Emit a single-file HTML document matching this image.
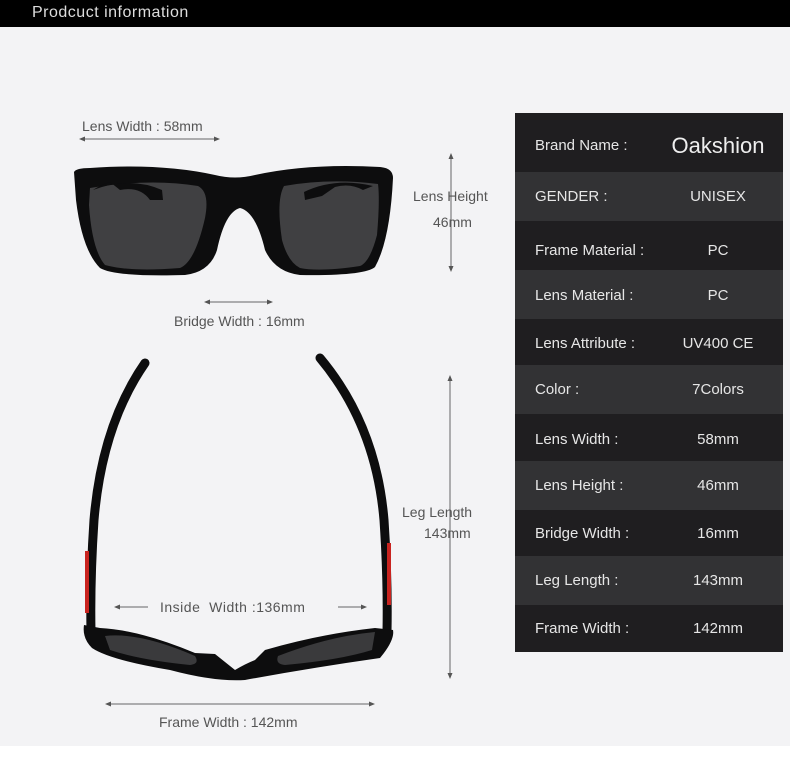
<!DOCTYPE html>
<html><head><style>
body{margin:0;width:790px;height:762px;background:#fff;position:relative;overflow:hidden;font-family:"Liberation Sans",sans-serif}
.bg{position:absolute;left:0;top:27px;width:790px;height:719px;background:#f3f3f5}
.hd{position:absolute;left:0;top:0;width:790px;height:27px;background:#000;color:#ddd;font-size:16px;letter-spacing:0.5px}
.hd span{position:absolute;left:32px;top:4px}
.t{position:absolute;color:#555;font-size:14px;white-space:nowrap}
.row{position:absolute;left:515px;width:268px;color:#e6e6e6;font-size:15px}
.row .k{position:absolute;left:20px;white-space:nowrap}
.row .v{position:absolute;left:203px;transform:translateX(-50%);white-space:nowrap}
</style></head><body>
<div class="bg"></div>
<div class="hd"><span>Prodcuct information</span></div>
<svg width="790" height="762" style="position:absolute;left:0;top:0">
<defs><marker id="a" markerWidth="6" markerHeight="6" refX="3" refY="3" orient="auto-start-reverse"><path d="M0,0.5 L6,3 L0,5.5z" fill="#555"/></marker></defs>
<g stroke="#666" stroke-width="1" fill="none">
<line x1="82" y1="139" x2="217" y2="139" marker-start="url(#a)" marker-end="url(#a)"/>
<line x1="207" y1="302" x2="270" y2="302" marker-start="url(#a)" marker-end="url(#a)"/>
<line x1="451" y1="156" x2="451" y2="269" marker-start="url(#a)" marker-end="url(#a)"/>
<line x1="450" y1="378" x2="450" y2="676" marker-start="url(#a)" marker-end="url(#a)"/>
<line x1="108" y1="704" x2="372" y2="704" marker-start="url(#a)" marker-end="url(#a)"/>
<line x1="117" y1="607" x2="148" y2="607" marker-start="url(#a)"/>
<line x1="338" y1="607" x2="364" y2="607" marker-end="url(#a)"/>
</g>
<!-- front glasses -->
<path d="M74,172 Q76,168 90,168 Q160,163 215,175 Q235,180 255,175 Q310,163 380,167 Q393,168 393,178 Q390,240 375,267 Q365,276 300,275 Q275,272 265,250 Q256,212 240,208 Q225,212 217,250 Q210,272 185,275 Q115,277 100,268 Q82,250 76,200z" fill="#0d0d0e"/>
<path d="M90,188 Q150,178 198,186 Q210,192 205,218 Q195,262 180,268 Q130,272 105,265 Q92,250 89,205z" fill="#404042"/>
<path d="M284,186 Q330,178 378,184 Q380,200 377,235 Q370,262 360,266 Q320,272 300,268 Q288,262 282,240 Q276,200 284,186z" fill="#404042"/>
<path d="M93,190 Q100,185 110,182 L120,190 Q140,186 150,200 L163,200 L162,190 Q130,176 93,190z" fill="#0d0d0e"/>
<path d="M363,190 Q350,183 335,187 L322,196 L305,200 L304,192 Q335,177 373,186z" fill="#0d0d0e"/>
<!-- top view -->
<path d="M145,363 Q102,425 94,520 Q90,580 91,632" stroke="#0d0d0e" stroke-width="9" fill="none" stroke-linecap="round"/>
<path d="M320,358 Q376,425 384,520 Q388,580 387,632" stroke="#0d0d0e" stroke-width="9" fill="none" stroke-linecap="round"/>
<rect x="85" y="551" width="4" height="62" fill="#c8231f"/>
<rect x="387" y="543" width="4" height="62" fill="#c8231f"/>
<path d="M84,625 L100,628 Q140,630 195,653 L215,654 Q225,662 235,670 Q245,664 255,660 L265,650 Q320,634 375,628 L393,630 Q395,640 380,658 Q310,668 245,680 Q215,682 170,670 Q110,660 92,648 Q82,638 84,625z" fill="#0d0d0e"/>
<path d="M105,636 Q140,632 195,656 Q200,664 190,665 Q140,660 110,650z" fill="#3a3a3c"/>
<path d="M375,632 Q330,636 278,656 Q275,664 285,665 Q340,660 372,650z" fill="#3a3a3c"/>
</svg>
<div class="t" style="left:82px;top:118px">Lens Width : 58mm</div>
<div class="t" style="left:174px;top:313px">Bridge Width : 16mm</div>
<div class="t" style="left:413px;top:188px">Lens Height</div>
<div class="t" style="left:433px;top:214px">46mm</div>
<div class="t" style="left:402px;top:504px">Leg Length</div>
<div class="t" style="left:424px;top:525px">143mm</div>
<div class="t" style="left:160px;top:599px;letter-spacing:0.5px">Inside &nbsp;Width :136mm</div>
<div class="t" style="left:159px;top:714px">Frame Width : 142mm</div>

<div class="row" style="top:113px;height:59px;background:#1f1e20"><span class="k" style="top:24px">Brand Name :</span><span class="v" style="top:20px;font-size:22px;color:#eee">Oakshion</span></div>
<div class="row" style="top:172px;height:49px;background:#323234"><span class="k" style="top:16px">GENDER :</span><span class="v" style="top:16px">UNISEX</span></div>
<div class="row" style="top:221px;height:49px;background:#1f1e20"><span class="k" style="top:21px">Frame Material :</span><span class="v" style="top:21px">PC</span></div>
<div class="row" style="top:270px;height:49px;background:#323234"><span class="k" style="top:17px">Lens Material :</span><span class="v" style="top:17px">PC</span></div>
<div class="row" style="top:319px;height:46px;background:#1f1e20"><span class="k" style="top:16px">Lens Attribute :</span><span class="v" style="top:16px">UV400 CE</span></div>
<div class="row" style="top:365px;height:49px;background:#323234"><span class="k" style="top:16px">Color :</span><span class="v" style="top:16px">7Colors</span></div>
<div class="row" style="top:414px;height:47px;background:#1f1e20"><span class="k" style="top:17px">Lens Width :</span><span class="v" style="top:17px">58mm</span></div>
<div class="row" style="top:461px;height:49px;background:#323234"><span class="k" style="top:16px">Lens Height :</span><span class="v" style="top:16px">46mm</span></div>
<div class="row" style="top:510px;height:46px;background:#1f1e20"><span class="k" style="top:15px">Bridge Width :</span><span class="v" style="top:15px">16mm</span></div>
<div class="row" style="top:556px;height:49px;background:#323234"><span class="k" style="top:16px">Leg Length :</span><span class="v" style="top:16px">143mm</span></div>
<div class="row" style="top:605px;height:47px;background:#1f1e20"><span class="k" style="top:15px">Frame Width :</span><span class="v" style="top:15px">142mm</span></div>
</body></html>
